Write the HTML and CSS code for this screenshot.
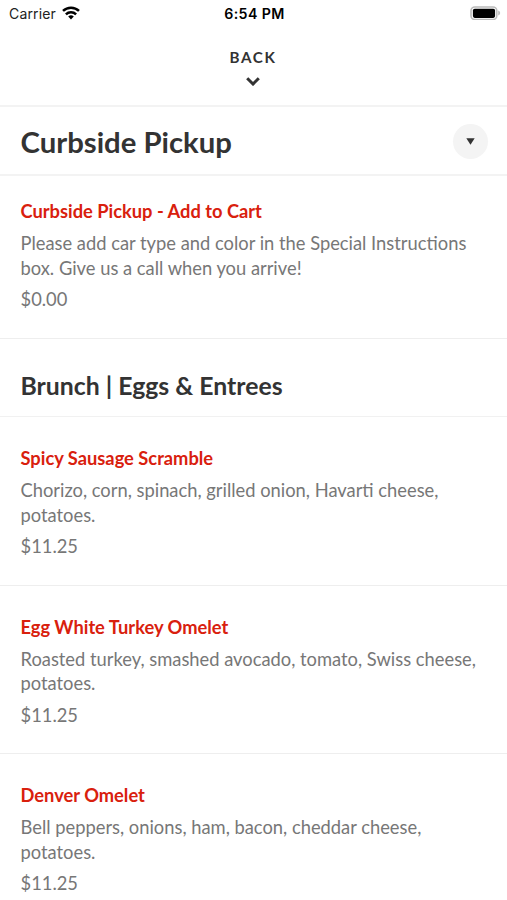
FILE: index.html
```html
<!DOCTYPE html>
<html lang="en">
<head>
    <meta charset="UTF-8">
    <meta name="viewport" content="width=device-width, initial-scale=1.0">
    <title>Curbside Pickup</title>
    <link rel="stylesheet" href="styles.css">
</head>
<body>
    <!-- Status bar -->
    <div class="status-bar">
        <div class="carrier">
            <span>Carrier</span>
            <svg class="wifi" viewBox="0 0 18 14" width="18" height="14">
                <path d="M1 4.9a11.6 11.6 0 0 1 16 0M3.9 8.3a7.3 7.3 0 0 1 10.2 0" fill="none" stroke="#000" stroke-width="2.5"/>
                <path d="M9 13.4L6.2 10.6a4.1 4.1 0 0 1 5.6 0z"/>
            </svg>
        </div>
        <div class="time">6:54 PM</div>
        <svg class="battery" viewBox="0 0 31 14" width="31" height="14">
            <rect x="1" y="1" width="25.8" height="12.6" rx="3.8" fill="none" stroke="#bbb" stroke-width="1.6"/>
            <rect x="2.9" y="2.7" width="22.2" height="9.2" rx="1.8"/>
            <path d="M28.2 4.6c2.6 1 2.6 4 0 5z" fill="#bbb"/>
        </svg>
    </div>

    <!-- Back button -->
    <div class="back">
        <span>BACK</span>
        <svg viewBox="0 0 14 9" width="14" height="9">
            <path d="M1.2 1.3L7 7l5.8-5.7" fill="none" stroke="#333" stroke-width="3"/>
        </svg>
    </div>

    <div class="title-bar">
        <h1>Curbside Pickup</h1>
        <button class="dropdown">
            <svg viewBox="0 0 9 7" width="9" height="7"><path d="M.3.3h8.4L4.5 6.8z" fill="#333"/></svg>
        </button>
    </div>

    <!-- Menu -->
    <div class="item pickup">
        <h3>Curbside Pickup - Add to Cart</h3>
        <p>Please add car type and color in the Special Instructions box. Give us a call when you arrive!</p>
        <div class="price">$0.00</div>
    </div>

    <h2>Brunch | Eggs &amp; Entrees</h2>

    <div class="item">
        <h3>Spicy Sausage Scramble</h3>
        <p>Chorizo, corn, spinach, grilled onion, Havarti cheese, potatoes.</p>
        <div class="price">$11.25</div>
    </div>
    <div class="item">
        <h3>Egg White Turkey Omelet</h3>
        <p>Roasted turkey, smashed avocado, tomato, Swiss cheese, potatoes.</p>
        <div class="price">$11.25</div>
    </div>
    <div class="item">
        <h3>Denver Omelet</h3>
        <p>Bell peppers, onions, ham, bacon, cheddar cheese, potatoes.</p>
        <div class="price">$11.25</div>
    </div>
</body>
</html>
```
FILE: styles.css
```css
* {
    box-sizing: border-box;
}

body {
    margin: 0;
    height: 900px;
    overflow: hidden;
    background: #fff;
    color: #333;
    font-family: Lato, sans-serif;
}

h1, h2, h3, p {
    margin: 0;
}

/* Status bar */
.status-bar {
    display: grid;
    grid-template-columns: 1fr auto 1fr;
    align-items: center;
    height: 27px;
    padding: 0 7px 0 9px;
    font-family: Inter, sans-serif;
    font-size: 14px;
    color: #000;
}

.carrier {
    display: flex;
    align-items: center;
    gap: 6px;
    letter-spacing: 0.15px;
    color: #222;
}

.wifi {
    margin-top: -2px;
}

.time {
    font-size: 14.2px;
    font-weight: 600;
    letter-spacing: 0.4px;
}

.battery {
    justify-self: end;
    margin-right: -1px;
    margin-top: -1px;
}

/* Back */
.back {
    display: flex;
    flex-direction: column;
    align-items: center;
    gap: 10px;
    height: 80px;
    padding: 21px 1px 0 0;
    border-bottom: 2px solid #f3f3f3;
    font-size: 15.2px;
    font-weight: 700;
    line-height: 19px;
    letter-spacing: 1.6px;
}

.title-bar {
    display: flex;
    align-items: center;
    justify-content: space-between;
    height: 69px;
    padding: 2px 19px 0 20.5px;
    border-bottom: 2px solid #f3f3f3;
}

h1 {
    font-size: 29.3px;
    font-weight: 700;
    line-height: 36px;
}

.dropdown {
    display: flex;
    align-items: center;
    justify-content: center;
    width: 35px;
    height: 35px;
    padding: 0;
    border: none;
    border-radius: 50%;
    background: #f4f4f4;
}

/* Menu items */
.item {
    height: 168.6px;
    padding: 29px 20.5px 0;
    border-bottom: 1px solid #eee;
    font-size: 18.33px;
    line-height: 24.6px;
    color: #777;
}

.pickup {
    height: 163px;
    padding-top: 23px;
}

h3 {
    margin-bottom: 7px;
    font-size: 18.3px;
    font-weight: 700;
    line-height: 25px;
    color: #d9200d;
}

.price {
    margin-top: 7px;
}

h2 {
    height: 78px;
    padding: 32px 20.5px 0;
    border-bottom: 1px solid #f1f1f1;
    font-size: 24.8px;
    font-weight: 700;
    line-height: 30px;
}
```
